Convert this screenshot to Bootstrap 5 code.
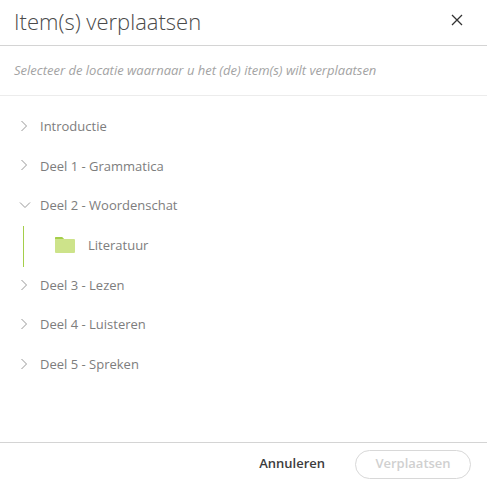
<!DOCTYPE html>
<html lang="nl">
  <head>
    <meta charset="UTF-8" />
    <meta name="viewport" content="width=device-width, initial-scale=1.0" />
    <link
      rel="stylesheet"
      href="https://cdn.jsdelivr.net/npm/bootstrap@5.3.0/dist/css/bootstrap.min.css"
    />
    <title>Item(s) verplaatsen</title>
    <style>
      body {
        font-family: "Open Sans", sans-serif;
        background: #fff;
      }
      .move-dialog {
        width: 487px;
        height: 485px;
      }
      .move-head {
        height: 46px;
        padding: 0 23px 0 14px;
        border-bottom: 1px solid #d4d4d4;
      }
      .move-title {
        font-size: 22px;
        font-weight: 300;
        color: #4a4a4a;
        margin: 0 0 2px;
      }
      .close-x {
        width: 14px;
        height: 14px;
        padding: 0;
        margin-bottom: 5px;
        border: 0;
        background: none;
        line-height: 0;
      }
      .move-hint {
        height: 50px;
        padding: 0 14px;
        border-bottom: 1px solid #ececec;
        font-size: 13px;
        font-style: italic;
        color: #a3a3a3;
      }
      .move-tree {
        padding: 11px 0 0;
        list-style: none;
        margin: 0;
      }
      .tree-row {
        height: 39.6px;
        font-size: 13px;
        color: #7d7d7d;
      }
      .tree-arrow {
        width: 40px;
        padding-left: 19px;
        margin-top: -2px;
        line-height: 0;
      }
      .tree-child {
        margin-left: 23px;
        padding: 0 0 2px 31px;
        border-left: 1px solid #a5ce4a;
        height: 41px;
        margin-bottom: -1px;
        gap: 13px;
      }
      .move-foot {
        height: 43px;
        padding-right: 16px;
        border-top: 1px solid #d4d4d4;
        gap: 30px;
      }
      .btn-cancel {
        font-size: 13px;
        font-weight: 600;
        color: #3c3c3c;
        padding: 0;
        border: 0;
      }
      .btn-move {
        width: 116px;
        height: 29px;
        padding: 0;
        font-size: 13px;
        font-weight: 600;
        color: #d0d0d0;
        border: 1px solid #d8d8d8;
        border-radius: 15px;
        background: #fff;
      }
    </style>
  </head>
  <body>
    <div class="move-dialog d-flex flex-column">
      <div class="move-head d-flex align-items-center justify-content-between">
        <h1 class="move-title">Item(s) verplaatsen</h1>
        <button class="close-x" type="button" aria-label="Sluiten">
          <svg width="14" height="14" viewBox="0 0 14 14"><path d="M2 2l10 10M12 2L2 12" stroke="#333" stroke-width="1.3" fill="none" /></svg>
        </button>
      </div>
      <div class="move-hint d-flex align-items-center">Selecteer de locatie waarnaar u het (de) item(s) wilt verplaatsen</div>
      <ul class="move-tree flex-grow-1">
        <li class="tree-row d-flex align-items-center">
          <span class="tree-arrow"><svg width="10" height="12" viewBox="0 0 10 12"><path d="M2.5 1l5 5-5 5" stroke="#999" fill="none" /></svg></span>Introductie
        </li>
        <li class="tree-row d-flex align-items-center">
          <span class="tree-arrow"><svg width="10" height="12" viewBox="0 0 10 12"><path d="M2.5 1l5 5-5 5" stroke="#999" fill="none" /></svg></span>Deel 1 - Grammatica
        </li>
        <li class="tree-row d-flex align-items-center">
          <span class="tree-arrow"><svg width="12" height="10" viewBox="0 0 12 10"><path d="M1 2.500l5 5 5-5" stroke="#999" fill="none" /></svg></span>Deel 2 - Woordenschat
        </li>
        <li class="tree-row tree-child d-flex align-items-center">
          <svg width="20" height="16" viewBox="0 0 20 16"><path d="M0 1Q0 0 1 0h6l2 2h10q1 0 1 1v12q0 1-1 1H1q-1 0-1-1z" fill="#cde38a" /><path d="M0 2V1Q0 0 1 0h6l2 2z" fill="#a5ce4a" /></svg>
          <span>Literatuur</span>
        </li>
        <li class="tree-row d-flex align-items-center">
          <span class="tree-arrow"><svg width="10" height="12" viewBox="0 0 10 12"><path d="M2.5 1l5 5-5 5" stroke="#999" fill="none" /></svg></span>Deel 3 - Lezen
        </li>
        <li class="tree-row d-flex align-items-center">
          <span class="tree-arrow"><svg width="10" height="12" viewBox="0 0 10 12"><path d="M2.5 1l5 5-5 5" stroke="#999" fill="none" /></svg></span>Deel 4 - Luisteren
        </li>
        <li class="tree-row d-flex align-items-center">
          <span class="tree-arrow"><svg width="10" height="12" viewBox="0 0 10 12"><path d="M2.5 1l5 5-5 5" stroke="#999" fill="none" /></svg></span>Deel 5 - Spreken
        </li>
      </ul>
      <div class="move-foot d-flex align-items-center justify-content-end">
        <button class="btn btn-cancel" type="button">Annuleren</button>
        <button class="btn-move" type="button" disabled>Verplaatsen</button>
      </div>
    </div>
    <script src="https://cdn.jsdelivr.net/npm/bootstrap@5.3.0/dist/js/bootstrap.bundle.min.js"></script>
  </body>
</html>
